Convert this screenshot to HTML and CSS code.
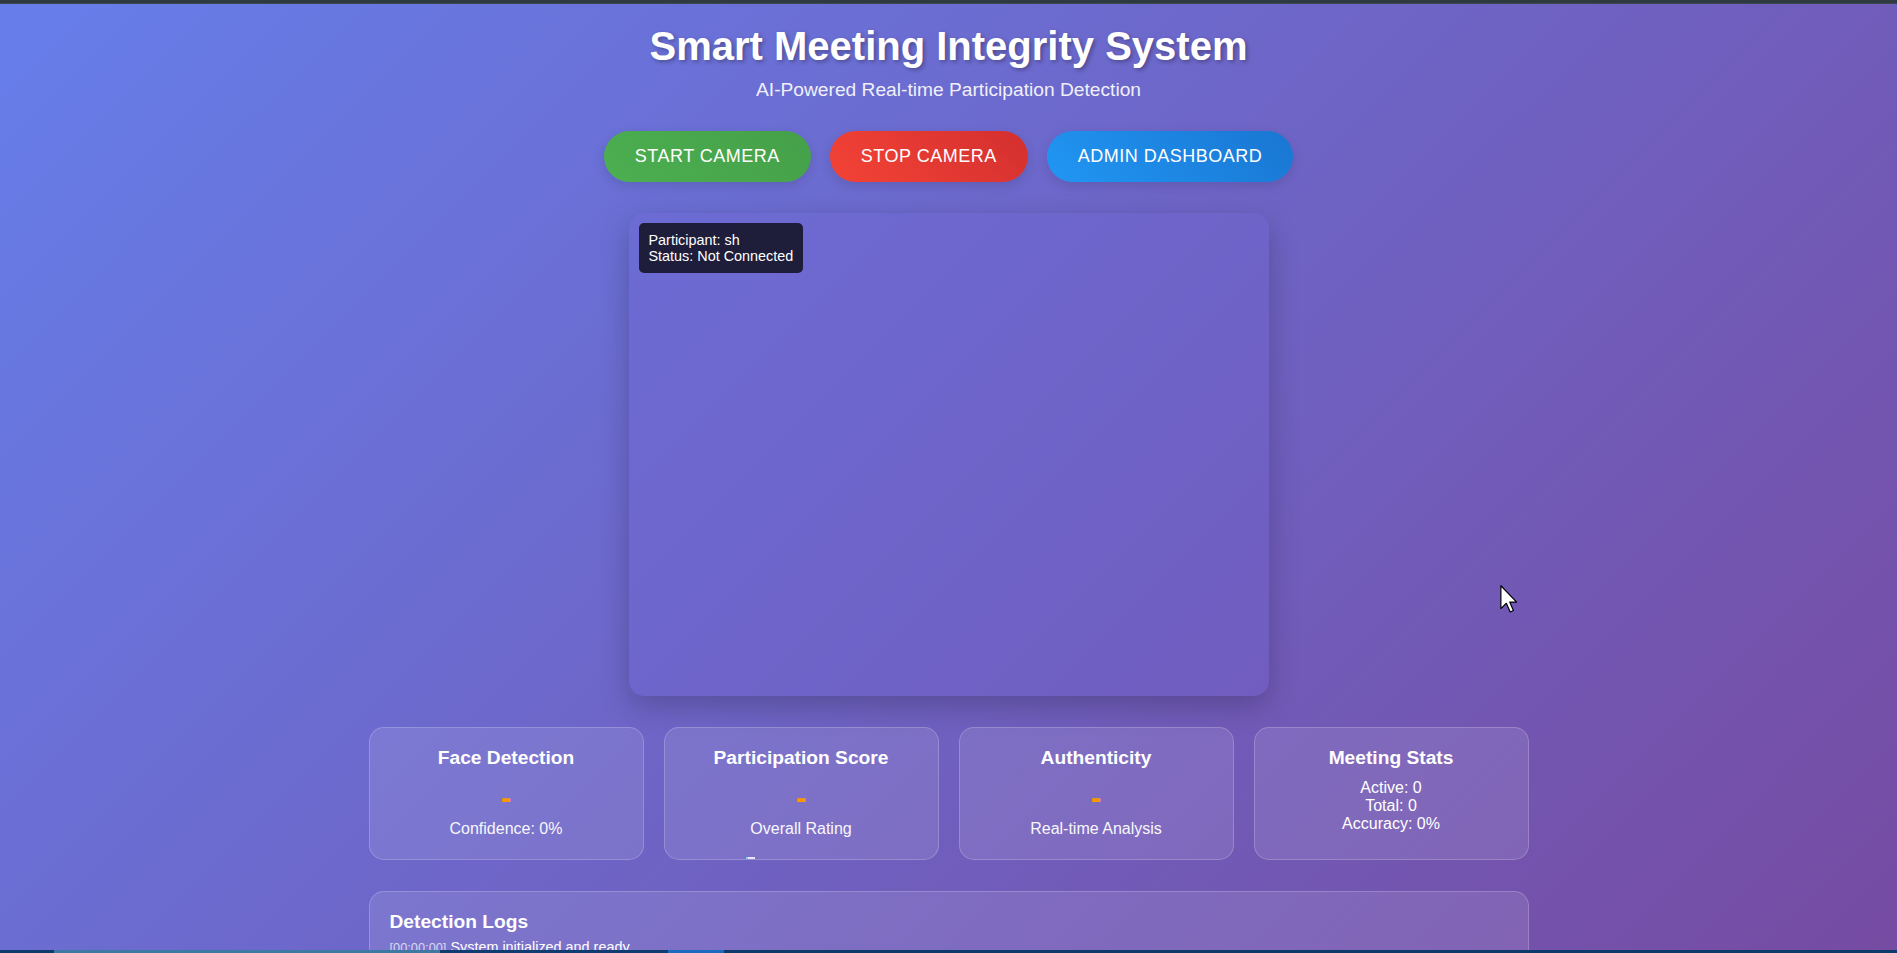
FILE: index.html
```html
<!DOCTYPE html>
<html lang="en">
<head>
<meta charset="utf-8">
<title>Smart Meeting Integrity System</title>
<link rel="stylesheet" href="styles.css">
</head>
<body>
<div class="topbar"></div>
<div class="container">
  <header class="header">
    <h1 class="title">Smart Meeting Integrity System</h1>
    <p class="subtitle">AI-Powered Real-time Participation Detection</p>
  </header>

  <div class="controls">
    <button class="btn btn-start">START CAMERA</button>
    <button class="btn btn-stop">STOP CAMERA</button>
    <button class="btn btn-admin">ADMIN DASHBOARD</button>
  </div>

  <div class="video-wrap">
    <div class="video-box">
      <div class="video-label">
        <div>Participant: sh</div>
        <div>Status: Not Connected</div>
      </div>
    </div>
  </div>

  <div class="stats">
    <div class="card">
      <h3 class="card-title">Face Detection</h3>
      <div class="card-value">-</div>
      <div class="card-label">Confidence: 0%</div>
    </div>
    <div class="card">
      <h3 class="card-title">Participation Score</h3>
      <div class="card-value">-</div>
      <div class="card-label">Overall Rating</div>
      <div class="card-mark"></div>
    </div>
    <div class="card">
      <h3 class="card-title">Authenticity</h3>
      <div class="card-value">-</div>
      <div class="card-label">Real-time Analysis</div>
    </div>
    <div class="card">
      <h3 class="card-title">Meeting Stats</h3>
      <div class="card-lines">
        <div>Active: 0</div>
        <div>Total: 0</div>
        <div>Accuracy: 0%</div>
      </div>
    </div>
  </div>

  <div class="logs">
    <h3 class="logs-title">Detection Logs</h3>
    <div class="log-list">
      <div class="log-entry"><span class="log-time">[00:00:00]</span> System initialized and ready</div>
    </div>
  </div>
</div>

<svg class="cursor" width="18" height="28" viewBox="0 0 12 19" xmlns="http://www.w3.org/2000/svg">
  <path d="M0.5 0.5 L0.5 16 L4.2 12.4 L6.8 18.3 L9 17.3 L6.5 11.6 L11.2 11.6 Z" fill="#fff" stroke="#000" stroke-width="0.8" stroke-linejoin="round"/>
</svg>
<div class="taskbar">
  <span class="tb tb-a"></span><span class="tb tb-b"></span><span class="tb tb-c"></span><span class="tb tb-d"></span><span class="tb tb-e"></span>
</div>
</body>
</html>
```

FILE: styles.css
```css
* { box-sizing: border-box; }

html {
  background: linear-gradient(135deg, #667eea 0%, #764ba2 100%) fixed;
  min-height: 100%;
}

body {
  margin: 0;
  font-family: "Liberation Sans", Arial, sans-serif;
  color: #fff;
  min-height: 100vh;
}

.topbar {
  height: 4px;
  background: #2e3a40;
  border-bottom: 1px solid #3b4a52;
}

.container {
  max-width: 1200px;
  margin: 0 auto;
  padding: 19px 20px 20px;
}

.header {
  text-align: center;
  margin-bottom: 30px;
}

.title {
  margin: 0 0 10px;
  font-size: 40px;
  font-weight: 700;
  line-height: 1.15;
  text-shadow: 2px 2px 4px rgba(0, 0, 0, 0.3);
}

.subtitle {
  margin: 0;
  font-size: 19.2px;
  line-height: 1.15;
  opacity: 0.9;
}

.controls {
  display: flex;
  justify-content: center;
  gap: 19px;
  margin-bottom: 31px;
}

.btn {
  border: none;
  border-radius: 26px;
  padding: 15px 31px;
  font-family: "Liberation Sans", Arial, sans-serif;
  font-size: 18px;
  letter-spacing: 0.5px;
  line-height: 1.15;
  color: #fff;
  cursor: pointer;
  box-shadow: 0 4px 12px rgba(0, 0, 0, 0.12);
}

.btn-start { background: linear-gradient(45deg, #4caf50, #45a049); }
.btn-stop { background: linear-gradient(45deg, #f44336, #d32f2f); }
.btn-admin { background: linear-gradient(45deg, #2196f3, #1976d2); }

.video-wrap {
  display: flex;
  justify-content: center;
  margin-bottom: 31px;
}

.video-box {
  position: relative;
  width: 640px;
  height: 483px;
  border-radius: 15px;
  background: rgba(110, 100, 210, 0.25);
  box-shadow: 0 10px 30px rgba(0, 0, 0, 0.22);
}

.video-label {
  position: absolute;
  top: 10px;
  left: 10px;
  padding: 9px 10px 8px;
  background: rgba(0, 0, 0, 0.72);
  border-radius: 5px;
  font-size: 14.4px;
  line-height: 1.15;
}

.stats {
  display: grid;
  grid-template-columns: repeat(4, 1fr);
  gap: 20px;
  margin-bottom: 31px;
}

.card {
  position: relative;
  text-align: center;
  padding: 19px 20px 20px;
  background: rgba(255, 255, 255, 0.1);
  border: 1px solid rgba(255, 255, 255, 0.2);
  border-radius: 15px;
  min-height: 133px;
}

.card-title {
  margin: 0 0 10px;
  font-size: 19.2px;
  font-weight: 700;
  line-height: 1.15;
}

.card-value {
  font-size: 32px;
  font-weight: 700;
  line-height: 1.15;
  color: #ff9800;
  margin-bottom: 4px;
}

.card-label {
  font-size: 16px;
  line-height: 1.15;
  opacity: 0.95;
}

.card-lines {
  font-size: 16px;
  line-height: 18px;
}

.card-mark {
  position: absolute;
  left: 81px;
  bottom: 0;
  width: 9px;
  height: 2px;
  background: linear-gradient(90deg, #7fd0ff 0 2px, #e8e6f5 2px);
}

.logs {
  padding: 19px 20px 20px;
  background: rgba(255, 255, 255, 0.1);
  border: 1px solid rgba(255, 255, 255, 0.2);
  border-radius: 15px;
  min-height: 220px;
}

.logs-title {
  margin: 0 0 6px;
  font-size: 19.2px;
  font-weight: 700;
  line-height: 1.15;
}

.log-entry {
  font-size: 14.4px;
  line-height: 1.15;
}

.log-time {
  font-size: 12.8px;
  opacity: 0.7;
}

.cursor {
  position: fixed;
  left: 1500px;
  top: 585px;
}

.taskbar {
  position: fixed;
  left: 0;
  right: 0;
  bottom: 0;
  height: 3px;
  display: flex;
}

.tb { display: block; height: 100%; }
.tb-a { width: 54px; background: #0b3c6c; }
.tb-b { width: 386px; background: #3c7aa2; }
.tb-c { width: 228px; background: #0d3d6e; }
.tb-d { width: 56px; background: #1a6cc0; }
.tb-e { flex: 1; background: #0c3b6b; }
```
